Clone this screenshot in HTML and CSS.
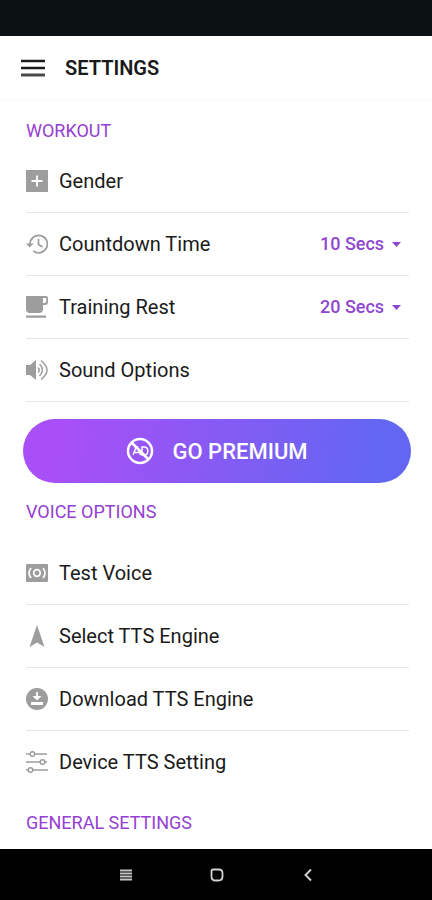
FILE: index.html
```html
<!DOCTYPE html>
<html lang="en">
<head>
<meta charset="utf-8">
<meta name="viewport" content="width=device-width, initial-scale=1">
<title>Settings</title>
<link rel="stylesheet" href="styles.css">
</head>
<body>
<div class="screen">
  <div class="status-bar"></div>
  <header class="app-bar">
    <button class="menu-button" type="button" aria-label="Open menu">
      <svg width="24" height="18" viewBox="0 0 24 18"><path d="M0 2h24M0 9h24" stroke="#1c1c1c" stroke-width="2.400"/><path d="M0 16h24" stroke="#4a4a4a" stroke-width="3"/></svg>
    </button>
    <h1 class="title">SETTINGS</h1>
  </header>
  <main class="content">
    <h2 class="section-title">WORKOUT</h2>
    <ul class="list">
      <li class="row">
        <button class="item" type="button">
          <svg class="icon" viewBox="0 0 22 22"><path fill="#9d9d9d" d="M0 0h22v22H0z"/><path d="M11 5.500v11M5.500 11h11" stroke="#fff" stroke-width="1.800"/></svg>
          Gender
        </button>
      </li>
      <li class="row">
        <label class="item" for="countdown">
          <svg class="icon" viewBox="0 0 22 22" fill="none" stroke="#9d9d9d" stroke-width="1.700"><path d="M4 11a8.700 8.700 0 1 1 3.200 6.800"/><path d="M12.500 6v5.500l4 2.400"/><path d="M0 10.500h7.600L3.800 14.500z" fill="#9d9d9d" stroke="none"/></svg>
          Countdown Time
        </label>
        <span class="picker">
          <select id="countdown" class="select"><option>10 Secs</option></select>
          <svg class="caret" width="9" height="5" viewBox="0 0 9 5"><path d="M0 0h9L4.500 5z" fill="#8c45cf"/></svg>
        </span>
      </li>
      <li class="row">
        <label class="item" for="rest">
          <svg class="icon" viewBox="0 0 22 22"><path fill="#9d9d9d" fill-rule="evenodd" d="M0 0h20q2 0 2 2v4q0 3-3 3h-2v4q0 4-4 4H4q-4 0-4-4zM17 2v5h1.500q1.800 0 1.800-1.800V2zM0 19.500h20v2.200H0z"/></svg>
          Training Rest
        </label>
        <span class="picker">
          <select id="rest" class="select"><option>20 Secs</option></select>
          <svg class="caret" width="9" height="5" viewBox="0 0 9 5"><path d="M0 0h9L4.500 5z" fill="#8c45cf"/></svg>
        </span>
      </li>
      <li class="row">
        <button class="item" type="button">
          <svg class="icon" viewBox="0 0 22 22" fill="none" stroke="#9d9d9d" stroke-width="1.500"><path d="M0 6h4l6-5v20l-6-5H0z" fill="#9d9d9d" stroke="none"/><path d="M12 8.500q2.600 2.500 0 5M13.500 5q6 6 0 12M15 1.500q12 9.500 0 19"/></svg>
          Sound Options
        </button>
      </li>
    </ul>
    <button class="premium" type="button">
      <svg width="28" height="28" viewBox="0 0 28 28" fill="none" stroke="#fff"><circle cx="14" cy="14" r="12" stroke-width="2.500"/><path d="M7 18l3.200-8h1.200l3.200 8M8.400 15.500h4.800M16 10v8h2.200q3.600 0 3.600-4t-3.600-4z" stroke-width="1.500"/><path d="M5.500 5.500l17 17" stroke-width="2.600"/></svg>
      GO PREMIUM
    </button>
    <h2 class="section-title section-title-spaced">VOICE OPTIONS</h2>
    <ul class="list">
      <li class="row">
        <button class="item" type="button">
          <svg class="icon" viewBox="0 0 22 22" fill="none" stroke="#fff" stroke-width="1.700"><rect y="2" width="22" height="18" rx="1" fill="#9d9d9d" stroke="none"/><circle cx="11" cy="11" r="3.300"/><path d="M5 6q-4 5 0 10M17 6q4 5 0 10"/></svg>
          Test Voice
        </button>
      </li>
      <li class="row">
        <button class="item" type="button">
          <svg class="icon" viewBox="0 0 22 22"><path d="M11 0l7.500 22L11 17.500 3.500 22z" fill="#9d9d9d"/></svg>
          Select TTS Engine
        </button>
      </li>
      <li class="row">
        <button class="item" type="button">
          <svg class="icon" viewBox="0 0 22 22"><circle cx="11" cy="11" r="11" fill="#9d9d9d"/><path d="M11 4v5" stroke="#fff" stroke-width="1.800"/><path d="M6.500 8h9L11 12.500zM5 14h12v3H5z" fill="#fff"/></svg>
          Download TTS Engine
        </button>
      </li>
      <li class="row">
        <button class="item" type="button">
          <svg class="icon" viewBox="0 0 22 22" fill="none" stroke="#9d9d9d" stroke-width="1.500"><path d="M0 3h4M9 3h12M0 11h14M19 11h2M0 19h2M7 19h15"/><circle cx="6.500" cy="3" r="2.300"/><circle cx="16.500" cy="11" r="2.300"/><circle cx="4.500" cy="19" r="2.300"/></svg>
          Device TTS Setting
        </button>
      </li>
    </ul>
    <h2 class="section-title">GENERAL SETTINGS</h2>
  </main>
  <nav class="nav-bar" aria-label="System">
    <button class="nav-button" type="button" aria-label="Recent apps"><svg width="14" height="14" viewBox="0 0 14 14"><path d="M1 2.500h12M1 5.500h12M1 8.500h12M1 11.500h12" stroke="#c4c4c4" stroke-width="1.900"/></svg></button>
    <button class="nav-button" type="button" aria-label="Home"><svg width="14" height="14" viewBox="0 0 14 14"><path d="M3 1.500h6q3.500 0 3.500 4v3q0 4-4 4h-3q-4 0-4-4V3q0-1.500 1.500-1.500z" fill="none" stroke="#d2d2d2" stroke-width="1.800"/></svg></button>
    <button class="nav-button" type="button" aria-label="Back"><svg width="14" height="14" viewBox="0 0 14 14"><path d="M10 1.500L4.500 7l5.500 5.500" fill="none" stroke="#d2d2d2" stroke-width="1.900"/></svg></button>
  </nav>
</div>
</body>
</html>
```
FILE: styles.css
```css
* {
  box-sizing: border-box;
}

body {
  margin: 0;
  background: #fff;
  color: #1a1a1a;
  font-family: Roboto, sans-serif;
}

button,
select {
  margin: 0;
  padding: 0;
  border: 0;
  background: none;
  color: inherit;
  font: inherit;
}

svg {
  display: block;
  flex: none;
}

.screen {
  display: flex;
  flex-direction: column;
  min-height: 100vh;
}

.status-bar {
  height: 36px;
  background: #0c1214;
}

.app-bar {
  display: flex;
  align-items: center;
  gap: 20px;
  height: 64px;
  padding: 1px 21px 0;
  border-bottom: 1px solid #fafafa;
}

.title {
  margin: 0;
  font-size: 20px;
  font-weight: 600;
  line-height: 24px;
}

.content {
  flex: 1;
  padding: 2px 23px 0 26px;
}

.section-title {
  margin: 18px 0 8px;
  color: #9440d2;
  font-size: 18px;
  font-weight: 400;
  line-height: 22px;
}

.section-title-spaced {
  margin-bottom: 19px;
}

.list {
  margin: 0;
  padding: 0;
  list-style: none;
}

.row {
  display: flex;
  align-items: stretch;
  height: 63px;
  border-bottom: 1px solid #e6e6e6;
}

.section-title-spaced + .list .row:last-child {
  border-bottom-color: transparent;
}

.item {
  display: flex;
  flex: 1;
  align-items: center;
  gap: 11px;
  font-size: 20px;
  line-height: 24px;
  text-align: left;
}

.icon {
  width: 22px;
  height: 22px;
}

.picker {
  position: relative;
  display: flex;
  align-items: center;
}

.select {
  padding-right: 24px;
  appearance: none;
  color: #9046d0;
  font-size: 18px;
  font-weight: 500;
  line-height: 24px;
}

.caret {
  position: absolute;
  right: 8px;
  pointer-events: none;
}

.premium {
  display: flex;
  align-items: center;
  justify-content: center;
  gap: 18px;
  width: calc(100% + 5px);
  height: 64px;
  margin: 17px -2px 0 -3px;
  border-radius: 32px;
  background: linear-gradient(100deg, #a94ff7 10%, #6366f1 90%);
  color: #fff;
  font-size: 22px;
  font-weight: 500;
}

.nav-bar {
  display: flex;
  align-items: center;
  justify-content: center;
  gap: 77px;
  height: 51px;
  padding-left: 2px;
  background: #000;
}
```
